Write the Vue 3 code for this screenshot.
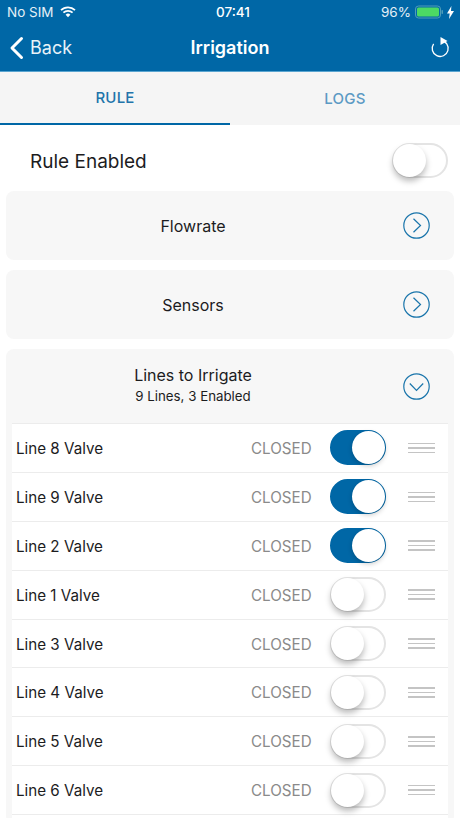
<template>
  <div class="screen">
    <header class="top">
      <div class="status">
        <div class="status-left">
          <span>No SIM</span>
          <svg class="wifi" width="16" height="12" viewBox="0 0 16 12">
            <path d="M1 4.200a10 10 0 0 1 14 0" fill="none" stroke="#fff" stroke-width="1.700" />
            <path d="M3.400 6.700a6.600 6.600 0 0 1 9.200 0" fill="none" stroke="#fff" stroke-width="1.700" />
            <path d="M5.600 8.800a3.400 3.400 0 0 1 4.800 0L8 11.300z" fill="#fff" />
          </svg>
        </div>
        <span class="clock">07:41</span>
        <div class="status-right">
          <span>96%</span>
          <svg width="28" height="14" viewBox="0 0 28 14">
            <rect x="0.500" y="1" width="25" height="12" rx="3" fill="none" stroke="#4f9db8" />
            <rect x="2" y="2.500" width="22" height="9" rx="1.500" fill="#4cd964" />
            <rect x="26.500" y="5" width="1.500" height="4" rx="0.700" fill="#4f9db8" />
          </svg>
          <svg width="7" height="13" viewBox="0 0 7 13">
            <path d="M4.400 0 0 7.400h2.700L2 13l5-8H4z" fill="#fff" />
          </svg>
        </div>
      </div>
      <div class="nav">
        <div class="back">
          <svg width="15" height="24" viewBox="0 0 15 24">
            <path d="M12.500 2.500 3 12l9.500 9.500" fill="none" stroke="#fff" stroke-width="3" stroke-linecap="round" stroke-linejoin="round" />
          </svg>
          <span>Back</span>
        </div>
        <div class="title">Irrigation</div>
        <svg class="refresh" width="20" height="22" viewBox="0 0 20 22">
          <path d="M11 3.500A8 8 0 1 1 3.600 6.900" fill="none" stroke="#fff" stroke-width="1.300" />
          <path d="M10.500 0 17.500 4l-7 4z" fill="#fff" />
        </svg>
      </div>
    </header>

    <nav class="tabs">
      <div class="tab tab--active">RULE</div>
      <div class="tab">LOGS</div>
    </nav>

    <div class="enabled">
      <span>Rule Enabled</span>
      <div class="switch switch--big"><i></i></div>
    </div>

    <section class="card">
      <span class="card-title">Flowrate</span>
      <svg class="circle" width="27" height="27" viewBox="0 0 27 27">
        <circle cx="13.500" cy="13.500" r="12.700" fill="none" stroke="#1a75ab" stroke-width="1.200" />
        <path d="M10.500 6.800 17.500 13.500 10.500 20.200" fill="none" stroke="#1a75ab" stroke-width="1.200" />
      </svg>
    </section>

    <section class="card">
      <span class="card-title">Sensors</span>
      <svg class="circle" width="27" height="27" viewBox="0 0 27 27">
        <circle cx="13.500" cy="13.500" r="12.700" fill="none" stroke="#1a75ab" stroke-width="1.200" />
        <path d="M10.500 6.800 17.500 13.500 10.500 20.200" fill="none" stroke="#1a75ab" stroke-width="1.200" />
      </svg>
    </section>

    <section class="lines">
      <div class="lines-head">
        <div class="lines-text">
          <div class="card-title">Lines to Irrigate</div>
          <div class="lines-sub">9 Lines, 3 Enabled</div>
        </div>
        <svg class="circle" width="27" height="27" viewBox="0 0 27 27">
          <circle cx="13.500" cy="13.500" r="12.700" fill="none" stroke="#1a75ab" stroke-width="1.200" />
          <path d="M6.800 10.500 13.500 17.500 20.200 10.500" fill="none" stroke="#1a75ab" stroke-width="1.200" />
        </svg>
      </div>
      <div v-for="line in lines" :key="line.name" class="row">
        <span class="row-name">{{ line.name }}</span>
        <span class="row-state">CLOSED</span>
        <div class="switch" :class="{ 'switch--on': line.on }"><i></i></div>
        <div class="grip"><b></b><b></b><b></b></div>
      </div>
      <div class="row row--rest"></div>
    </section>
  </div>
</template>

<script setup>
const lines = [
  { name: "Line 8 Valve", on: true },
  { name: "Line 9 Valve", on: true },
  { name: "Line 2 Valve", on: true },
  { name: "Line 1 Valve", on: false },
  { name: "Line 3 Valve", on: false },
  { name: "Line 4 Valve", on: false },
  { name: "Line 5 Valve", on: false },
  { name: "Line 6 Valve", on: false },
];
</script>

<style scoped>
.screen {
  width: 460px;
  height: 818px;
  overflow: hidden;
  background: #fff;
  color: #1c1c1e;
  font-family: Inter, "Liberation Sans", sans-serif;
}

.top {
  height: 71px;
  background: #0067a6;
  border-bottom: 1px solid #5aa5d0;
  color: #fff;
}

.status {
  height: 24px;
  padding: 0 6px 0 7px;
  display: flex;
  align-items: center;
  justify-content: space-between;
  font-size: 13.500px;
  color: #e4f0f7;
}
.status-left,
.status-right {
  display: flex;
  align-items: center;
}
.status-left {
  width: 133px;
  gap: 6px;
}
.status-right {
  width: 128px;
  justify-content: flex-end;
  gap: 4px;
}
.clock {
  font-weight: 500;
  color: #fff;
}

.nav {
  height: 47px;
  padding: 0 10px 0 9px;
  display: flex;
  align-items: center;
  position: relative;
}
.back {
  display: flex;
  align-items: center;
  gap: 6px;
  font-size: 18px;
  color: #e8f2f8;
}
.title {
  position: absolute;
  left: 0;
  right: 0;
  text-align: center;
  font-size: 18px;
  font-weight: 600;
}
.refresh {
  margin-left: auto;
}

.tabs {
  display: flex;
  height: 53px;
  background: #f5f5f5;
}
.tab {
  flex: 1;
  display: flex;
  align-items: center;
  justify-content: center;
  font-size: 15px;
  font-weight: 500;
  letter-spacing: 0.2px;
  color: #5c9ac4;
}
.tab--active {
  color: #2274aa;
  border-bottom: 2px solid #0067a6;
}

.enabled {
  height: 66px;
  box-sizing: border-box;
  padding: 4px 12px 0 30px;
  display: flex;
  align-items: center;
  justify-content: space-between;
  font-size: 19px;
}
.enabled span {
  margin-top: 2px;
}

.card,
.lines {
  margin: 0 6px 10px;
  background: #f7f7f7;
  border-radius: 8px;
}
.card {
  height: 69px;
  display: flex;
  align-items: center;
  padding-right: 24px;
}
.card-title {
  font-size: 16px;
}
.card > .card-title {
  flex: 1;
  text-align: center;
  padding-right: 23px;
}

.lines {
  padding: 0 6px;
}
.lines-head {
  height: 74px;
  display: flex;
  align-items: center;
  padding-right: 18px;
}
.lines-text {
  flex: 1;
  text-align: center;
  padding-right: 29px;
  margin-top: -3px;
}
.lines-sub {
  margin-top: 3px;
  font-size: 13.300px;
}
.circle {
  flex: none;
}

.row {
  height: 48.900px;
  box-sizing: border-box;
  display: flex;
  align-items: center;
  padding: 0 13px 0 4px;
  background: #fff;
  border-top: 1px solid #ececec;
}
.row--rest {
  height: 10px;
}
.row-name {
  flex: 1;
  font-size: 15.200px;
  padding-top: 1px;
}
.row-state {
  width: 79px;
  font-size: 15.200px;
  padding-top: 1px;
  color: #8a8a8a;
}

.switch {
  width: 56px;
  height: 35px;
  box-sizing: border-box;
  border: 2px solid #e4e4e4;
  border-radius: 18px;
  background: #fff;
  position: relative;
  margin-right: 22px;
}
.switch i {
  position: absolute;
  left: -1px;
  top: -1px;
  width: 33px;
  height: 33px;
  border-radius: 50%;
  background: #fff;
  box-shadow: 0 4px 6px rgba(0, 0, 0, 0.28);
}
.switch--on {
  background: #0067a6;
  border-color: #0067a6;
}
.switch--on i {
  left: auto;
  right: -1px;
  box-shadow: 0 2px 5px rgba(0, 0, 0, 0.2);
}
.switch--big {
  margin-right: 0;
}

.grip {
  width: 27px;
  display: flex;
  flex-direction: column;
  gap: 3px;
}
.grip b {
  display: block;
  height: 1.500px;
  background: #c4c4c4;
}
</style>
